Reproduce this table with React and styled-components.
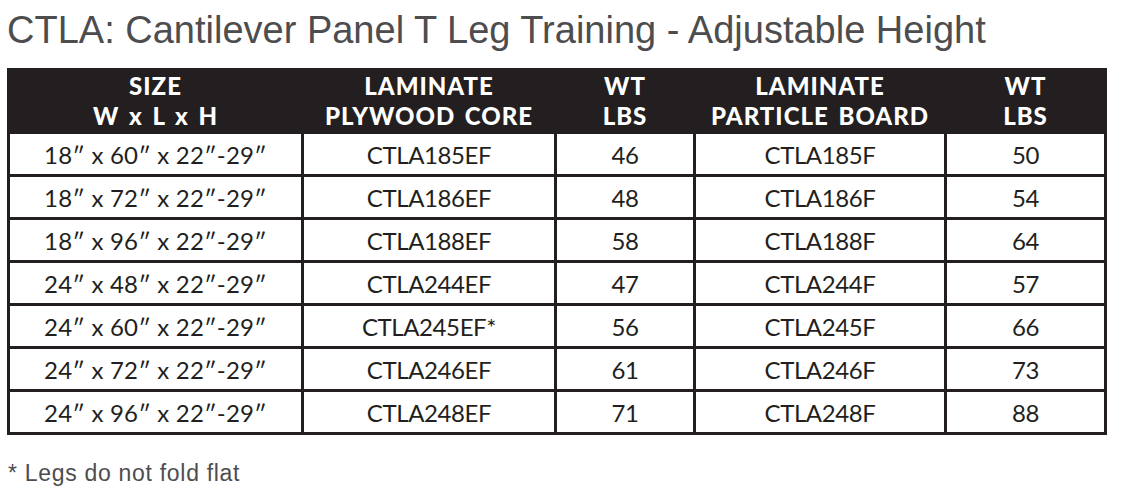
import React from "react";
import styled, { createGlobalStyle } from "styled-components";

const Global = createGlobalStyle`
  html, body { margin: 0; padding: 0; background: #ffffff; }
  body { font-family: "Liberation Sans", Arial, sans-serif; }
`;

const Page = styled.div`
  width: 1146px;
  height: 495px;
  padding: 9px 0 0 7px;
  box-sizing: border-box;
  overflow: hidden;
`;

const Title = styled.h1`
  margin: 0;
  font-family: "Liberation Sans", Arial, sans-serif;
  font-weight: 400;
  font-size: 38px;
  line-height: 42px;
  color: #4d4d4f;
  letter-spacing: 0;
  height: 59px;
`;

const Table = styled.table`
  border-collapse: collapse;
  table-layout: fixed;
  width: 1100px;
  border: 3px solid #231f20;
  color: #231f20;
`;

const HeadCell = styled.th`
  background: #231f20;
  color: #ffffff;
  font-family: Lato, "Open Sans", sans-serif;
  font-weight: 900;
  font-size: 24px;
  line-height: 30px;
  letter-spacing: 1px;
  word-spacing: 3px;
  height: 60px;
  padding: 0;
  text-align: center;
  border: 3px solid #231f20;
  vertical-align: middle;
`;

const Cell = styled.td`
  font-family: Lato, "Open Sans", sans-serif;
  font-weight: 400;
  font-size: 24px;
  letter-spacing: ${(p) => (p.$size ? "0.2px" : "-0.4px")};
  height: 40px;
  padding: 0;
  text-align: center;
  border: 3px solid #231f20;
  vertical-align: middle;
`;

const Footnote = styled.p`
  margin: 25px 0 0 1px;
  font-family: "Liberation Sans", Arial, sans-serif;
  font-size: 23px;
  letter-spacing: 0.7px;
  color: #4d4d4f;
`;

const cols = [294, 253, 139, 251, 160];

const rows = [
  ["18″ x 60″ x 22″-29″", "CTLA185EF", "46", "CTLA185F", "50"],
  ["18″ x 72″ x 22″-29″", "CTLA186EF", "48", "CTLA186F", "54"],
  ["18″ x 96″ x 22″-29″", "CTLA188EF", "58", "CTLA188F", "64"],
  ["24″ x 48″ x 22″-29″", "CTLA244EF", "47", "CTLA244F", "57"],
  ["24″ x 60″ x 22″-29″", "CTLA245EF*", "56", "CTLA245F", "66"],
  ["24″ x 72″ x 22″-29″", "CTLA246EF", "61", "CTLA246F", "73"],
  ["24″ x 96″ x 22″-29″", "CTLA248EF", "71", "CTLA248F", "88"],
];

const heads = [
  ["SIZE", "W x L x H"],
  ["LAMINATE", "PLYWOOD CORE"],
  ["WT", "LBS"],
  ["LAMINATE", "PARTICLE BOARD"],
  ["WT", "LBS"],
];

export default function App() {
  return (
    <>
      <Global />
      <Page>
        <Title>CTLA: Cantilever Panel T Leg Training - Adjustable Height</Title>
        <Table>
          <colgroup>
            {cols.map((w, i) => (
              <col key={i} style={{ width: w }} />
            ))}
          </colgroup>
          <thead>
            <tr>
              {heads.map((h, i) => (
                <HeadCell key={i}>
                  {h[0]}
                  <br />
                  {h[1]}
                </HeadCell>
              ))}
            </tr>
          </thead>
          <tbody>
            {rows.map((r, i) => (
              <tr key={i}>
                {r.map((c, j) => (
                  <Cell key={j} $size={j === 0}>
                    {c}
                  </Cell>
                ))}
              </tr>
            ))}
          </tbody>
        </Table>
        <Footnote>* Legs do not fold flat</Footnote>
      </Page>
    </>
  );
}
